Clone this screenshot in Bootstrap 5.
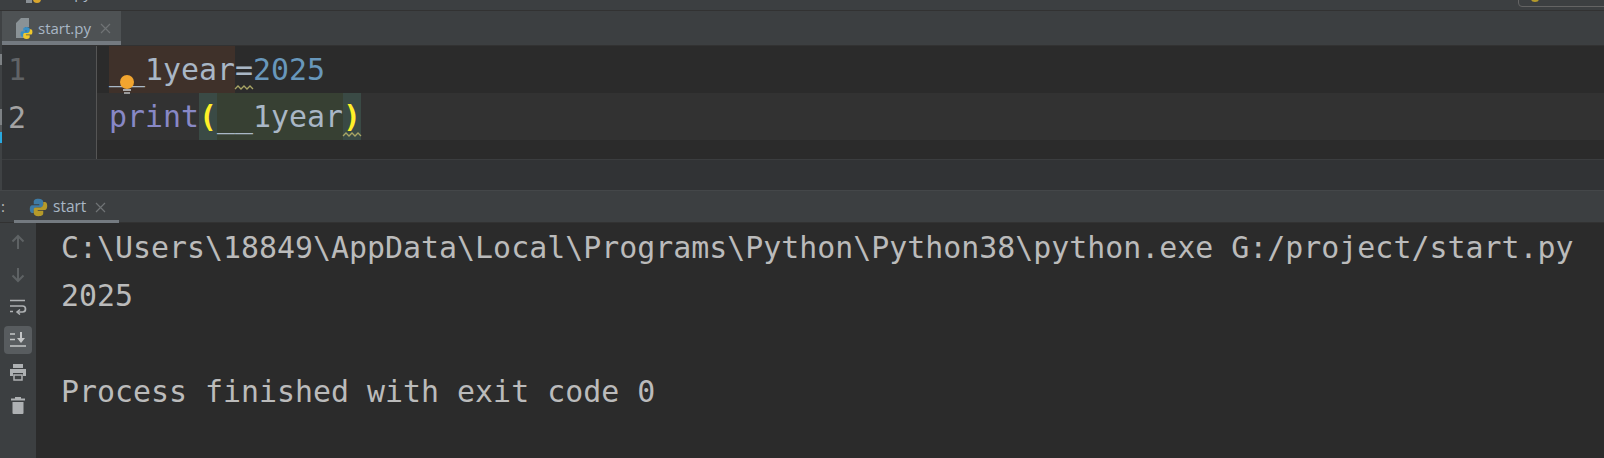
<!DOCTYPE html>
<html lang="en">
<head>
<meta charset="utf-8">
<title>start.py</title>
<link href="https://cdn.jsdelivr.net/npm/bootstrap@5.3.0/dist/css/bootstrap.min.css" rel="stylesheet">
<style>
html,body{height:458px;overflow:hidden;background:#3c3f41;}
body{font-family:"Open Sans","Liberation Sans",sans-serif;}
.top-strip{height:11px;background:#3c3f41;border-bottom:1px solid #323232;overflow:hidden;position:relative;}
.crumb-clip{position:absolute;left:38px;top:-19px;font-size:15px;line-height:22px;color:#a9b7c6;}
.crumb-dot{position:absolute;left:33px;top:-5px;width:8px;height:8px;border-radius:50%;background:#d9a62e;}
.crumb-file{position:absolute;left:26px;top:-5px;width:6px;height:8px;background:#8a9095;}
.run-box{position:absolute;left:1518px;top:-10px;width:100px;height:17px;border:1px solid #646464;border-radius:4px;}
.run-dot{position:absolute;left:1531px;top:-4px;width:8px;height:6px;border-radius:50%;background:#b59a2a;}
.upper{height:179px;}
.left-strip{width:2px;background:#3f4244;}
.stripe{width:2px;}
.stripe-a{height:11px;margin-top:43px;background:#7d8184;}
.stripe-b{height:16px;margin-top:44px;background:#7d8184;}
.stripe-c{height:7px;background:#55585a;}
.stripe-d{height:11px;background:#29a9e0;}
.upper-main{flex:1;min-width:0;}
.tab-row{height:34px;background:#3c3f41;}
.file-tab{height:34px;width:119px;background:#4e5254;border-bottom:4px solid #747a80;padding-left:14px;padding-top:4px;color:#a9b7c6;font-size:15px;gap:5px;}
.ed-area{height:114px;background:#2b2b2b;font-family:"DejaVu Sans Mono","Liberation Mono",monospace;font-size:29.9px;line-height:48px;border-top:1px solid #323232;}
.ed-gutter{width:95px;background:#313335;border-right:1px solid #555;height:113px;color:#606366;padding-left:6px;}
.gut-line{height:48px;}
.gut-line.now{color:#a4a3a3;}
.ed-code{flex:1;color:#a9b7c6;}
.code-line{height:47px;padding-left:12px;white-space:pre;}
.code-line.cur{background:#323232;}
.cmark{display:inline-block;height:47px;position:relative;vertical-align:top;}
.warn{background:#3f312a;}
.bg-var{background:#374033;}
.bg-par{background:#3a4a45;color:#ffef28;font-weight:700;}
.kw{color:#8888c6;}
.num{color:#6897bb;}
.wavy{position:absolute;left:0;width:19px;bottom:3px;height:5px;overflow:visible;}
.bulb{position:absolute;left:8px;top:28px;width:20px;height:22px;}
.mid-bar{height:31px;background:#313335;border-top:1px solid #3b3d3f;}
.run-row{height:33px;background:#3c3f41;border-bottom:1px solid #323232;border-top:1px solid #444749;color:#bbb;}
.run-colon{width:14px;padding-left:1px;font-size:15px;}
.run-tab{height:32px;width:105px;border-bottom:3px solid #747a80;padding-left:15px;padding-top:3px;font-size:15.5px;gap:5px;color:#a9b7c6;}
.cons{height:235px;}
.side-bar{width:36px;background:#3c3f41;padding-top:5px;}
.side-ico{width:28px;height:28px;margin-left:4px;margin-bottom:4.7px;border-radius:4px;}
.side-ico.on{background:#585c5f;}
.out{flex:1;background:#2b2b2b;color:#bbbbbb;font-family:"DejaVu Sans Mono","Liberation Mono",monospace;font-size:29.92px;line-height:48px;padding:1px 0 0 25px;white-space:pre;}
</style>
</head>
<body>
<div class="top-strip">
  <span class="crumb-file"></span><span class="crumb-dot"></span>
  <span class="crumb-clip">start.py</span>
  <span class="run-box"></span><span class="run-dot"></span>
</div>
<div class="upper d-flex">
  <div class="left-strip flex-shrink-0">
    <div class="stripe stripe-a"></div>
    <div class="stripe stripe-b"></div>
    <div class="stripe stripe-c"></div>
    <div class="stripe stripe-d"></div>
  </div>
  <div class="upper-main">
    <div class="tab-row d-flex">
      <div class="file-tab d-flex align-items-center">
        <svg width="17" height="21" viewBox="0 0 17 21" class="flex-shrink-0">
          <path d="M0 5l5-5h8v9H9v11H0z" fill="#8a9296"/>
          <g transform="translate(4 8.500) scale(.54)">
            <path d="M12 1C7 1 6 3 6 5v3h7v1H4C2 9 1 11 1 14s1 5 3 5h2v-3c0-2 2-4 4-4h5c2 0 3-1 3-3V5c0-2-2-4-6-4z" fill="#3a8fc4"/>
            <path d="M12 23c5 0 6-2 6-4v-3h-7v-1h9c2 0 3-2 3-5s-1-5-3-5h-2v3c0 2-2 4-4 4H9c-2 0-3 1-3 3v4c0 2 2 4 6 4z" fill="#f0c92c"/>
          </g>
        </svg>
        <span>start.py</span>
        <svg class="ms-1" width="11" height="11" viewBox="0 0 11 11"><path d="M1 1l9 9M10 1l-9 9" stroke="#6f7375" stroke-width="1.2" fill="none"/></svg>
      </div>
    </div>
    <div class="ed-area d-flex">
      <div class="ed-gutter">
        <div class="gut-line">1</div>
        <div class="gut-line now">2</div>
      </div>
      <div class="ed-code">
        <div class="code-line"><span class="cmark warn">__1year<svg class="bulb" viewBox="0 0 20 22"><circle cx="10" cy="8" r="7" fill="#f2a52f"/><rect x="6" y="15" width="8" height="2" fill="#aaa"/><rect x="7" y="18" width="6" height="2" fill="#999"/></svg></span><span class="cmark">=<svg class="wavy" viewBox="0 0 19 5"><path d="M0 4l3-3 3 3 3-3 3 3 3-3 3 3" stroke="#a8a565" stroke-width="1.300" fill="none"/></svg></span><span class="num">2025</span></div>
        <div class="code-line cur"><span class="kw">print</span><span class="cmark bg-par">(</span><span class="cmark bg-var">__1year</span><span class="cmark bg-par">)<svg class="wavy" viewBox="0 0 19 5"><path d="M0 4l3-3 3 3 3-3 3 3 3-3 3 3" stroke="#a8a565" stroke-width="1.300" fill="none"/></svg></span></div>
      </div>
    </div>
    <div class="mid-bar"></div>
  </div>
</div>
<div class="run-row d-flex">
  <div class="run-colon d-flex align-items-center">:</div>
  <div class="run-tab d-flex align-items-center">
    <svg width="19" height="19" viewBox="0 0 24 24" class="flex-shrink-0">
      <path d="M12 1C7 1 6 3 6 5v3h7v1H4C2 9 1 11 1 14s1 5 3 5h2v-3c0-2 2-4 4-4h5c2 0 3-1 3-3V5c0-2-2-4-6-4z" fill="#3d7ba6"/>
      <path d="M12 23c5 0 6-2 6-4v-3h-7v-1h9c2 0 3-2 3-5s-1-5-3-5h-2v3c0 2-2 4-4 4H9c-2 0-3 1-3 3v4c0 2 2 4 6 4z" fill="#b59a2a"/>
    </svg>
    <span>start</span>
    <svg class="ms-1" width="11" height="11" viewBox="0 0 11 11"><path d="M1 1l9 9M10 1l-9 9" stroke="#6f7375" stroke-width="1.2" fill="none"/></svg>
  </div>
</div>
<div class="cons d-flex">
  <div class="side-bar">
    <div class="side-ico d-flex align-items-center justify-content-center"><svg width="16" height="16" viewBox="0 0 16 16"><path d="M8 15V2M2.500 7.500L8 2l5.500 5.500" stroke="#5e6264" stroke-width="2" fill="none"/></svg></div>
    <div class="side-ico d-flex align-items-center justify-content-center"><svg width="16" height="16" viewBox="0 0 16 16"><path d="M8 1v13M2.500 8.500L8 14l5.500-5.500" stroke="#5e6264" stroke-width="2" fill="none"/></svg></div>
    <div class="side-ico d-flex align-items-center justify-content-center"><svg width="18" height="16" viewBox="0 0 18 16"><path d="M1 1.500h15M1 7h12.500a2.500 2.500 0 0 1 0 6H9M1 12.500h3" stroke="#aeb1b3" stroke-width="1.700" fill="none"/><path d="M11 10.500l-3 2.500 3 2.500" stroke="#aeb1b3" stroke-width="1.500" fill="none"/></svg></div>
    <div class="side-ico on d-flex align-items-center justify-content-center"><svg width="18" height="16" viewBox="0 0 18 16"><path d="M1 2h5M1 7.500h5M1 14h16" stroke="#c4c6c7" stroke-width="1.700" fill="none"/><path d="M12 0v7" stroke="#c4c6c7" stroke-width="2" fill="none"/><path d="M8 6h8l-4 5z" fill="#c4c6c7"/></svg></div>
    <div class="side-ico d-flex align-items-center justify-content-center"><svg width="18" height="17" viewBox="0 0 18 17"><path d="M4 0h10v4H4z" fill="#aeb1b3"/><path d="M1 5h16v7h-3V9H4v3H1z" fill="#aeb1b3"/><path d="M5 11h8v5H5z" fill="none" stroke="#aeb1b3" stroke-width="1.500"/></svg></div>
    <div class="side-ico d-flex align-items-center justify-content-center"><svg width="14" height="17" viewBox="0 0 14 17"><path d="M0 1.500h14v2H0zM4 0h6v1.500H4z" fill="#aeb1b3"/><path d="M1.500 5h11v11a1 1 0 0 1-1 1h-9a1 1 0 0 1-1-1z" fill="#aeb1b3"/></svg></div>
  </div>
  <div class="out"><div>C:\Users\18849\AppData\Local\Programs\Python\Python38\python.exe G:/project/start.py</div><div>2025</div><div> </div><div>Process finished with exit code 0</div></div>
</div>
</body>
</html>
